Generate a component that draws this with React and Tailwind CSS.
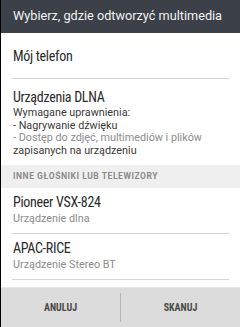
const devices = [
  { name: "Pioneer VSX-824", type: "Urządzenie dlna" },
  { name: "APAC-RICE", type: "Urządzenie Stereo BT" },
  { name: "JAMIE-VOST-W7N", type: "" },
]

export default function App() {
  return (
    <div className="w-[240px] h-[327px] flex flex-col bg-white border-l border-black overflow-hidden font-['Roboto',sans-serif]">
      <div className="h-[33px] shrink-0 bg-[#3b4049] flex items-center px-[12px]">
        <span className="text-[12.7px] text-[#f2f2f2] leading-none">Wybierz, gdzie odtworzyć multimedia</span>
      </div>

      <div className="flex-1 overflow-hidden">
        <div className="mx-[11px] pl-[1px] h-[46px] flex items-center border-b border-[#d6d6d6]">
          <span className="text-[14px] font-stretch-[75%] tracking-[-0.3px] text-[#2a2a2a] leading-none">Mój telefon</span>
        </div>

        <div className="px-[12px] pt-[10px] pb-[7px]">
          <div className="text-[14px] font-stretch-[75%] tracking-[-0.3px] text-[#2a2a2a] leading-[16px]">Urządzenia DLNA</div>
          <div className="text-[10.8px] text-[#3a3a3a] leading-[12.7px] mt-[2px]">
            <div>Wymagane uprawnienia:</div>
            <div>- Nagrywanie dźwięku</div>
            <div className="text-[#8c8c8c]">- Dostęp do zdjęć, multimediów i plików</div>
            <div>zapisanych na urządzeniu</div>
          </div>
        </div>

        <div className="h-[23px] bg-[#efefef] flex items-center px-[12px]">
          <span className="text-[8.5px] font-bold text-[#8a8a8a] leading-none tracking-[0.55px]">INNE GŁOŚNIKI LUB TELEWIZORY</span>
        </div>

        {devices.map((d) => (
          <div key={d.name} className="mx-[11px] pl-[1px] h-[46px] pt-[6px] flex flex-col border-b border-[#d6d6d6]">
            <span className="text-[14px] font-stretch-[75%] tracking-[-0.3px] text-[#2a2a2a] leading-[17px]">{d.name}</span>
            {d.type && <span className="text-[10.8px] text-[#8c8c8c] leading-[14px] mt-[1px]">{d.type}</span>}
          </div>
        ))}
      </div>

      <div className="h-[40px] shrink-0 bg-[#dcdcdc] border-t border-[#e8e8e8] flex items-center">
        <div className="flex-1 text-center text-[10px] font-bold font-stretch-[75%] text-[#4a4a4a] leading-[12px]">ANULUJ</div>
        <div className="w-px h-[29px] bg-[#b5b5b5]" />
        <div className="flex-1 text-center text-[10px] font-bold font-stretch-[75%] text-[#4a4a4a] leading-[12px]">SKANUJ</div>
      </div>
    </div>
  )
}
